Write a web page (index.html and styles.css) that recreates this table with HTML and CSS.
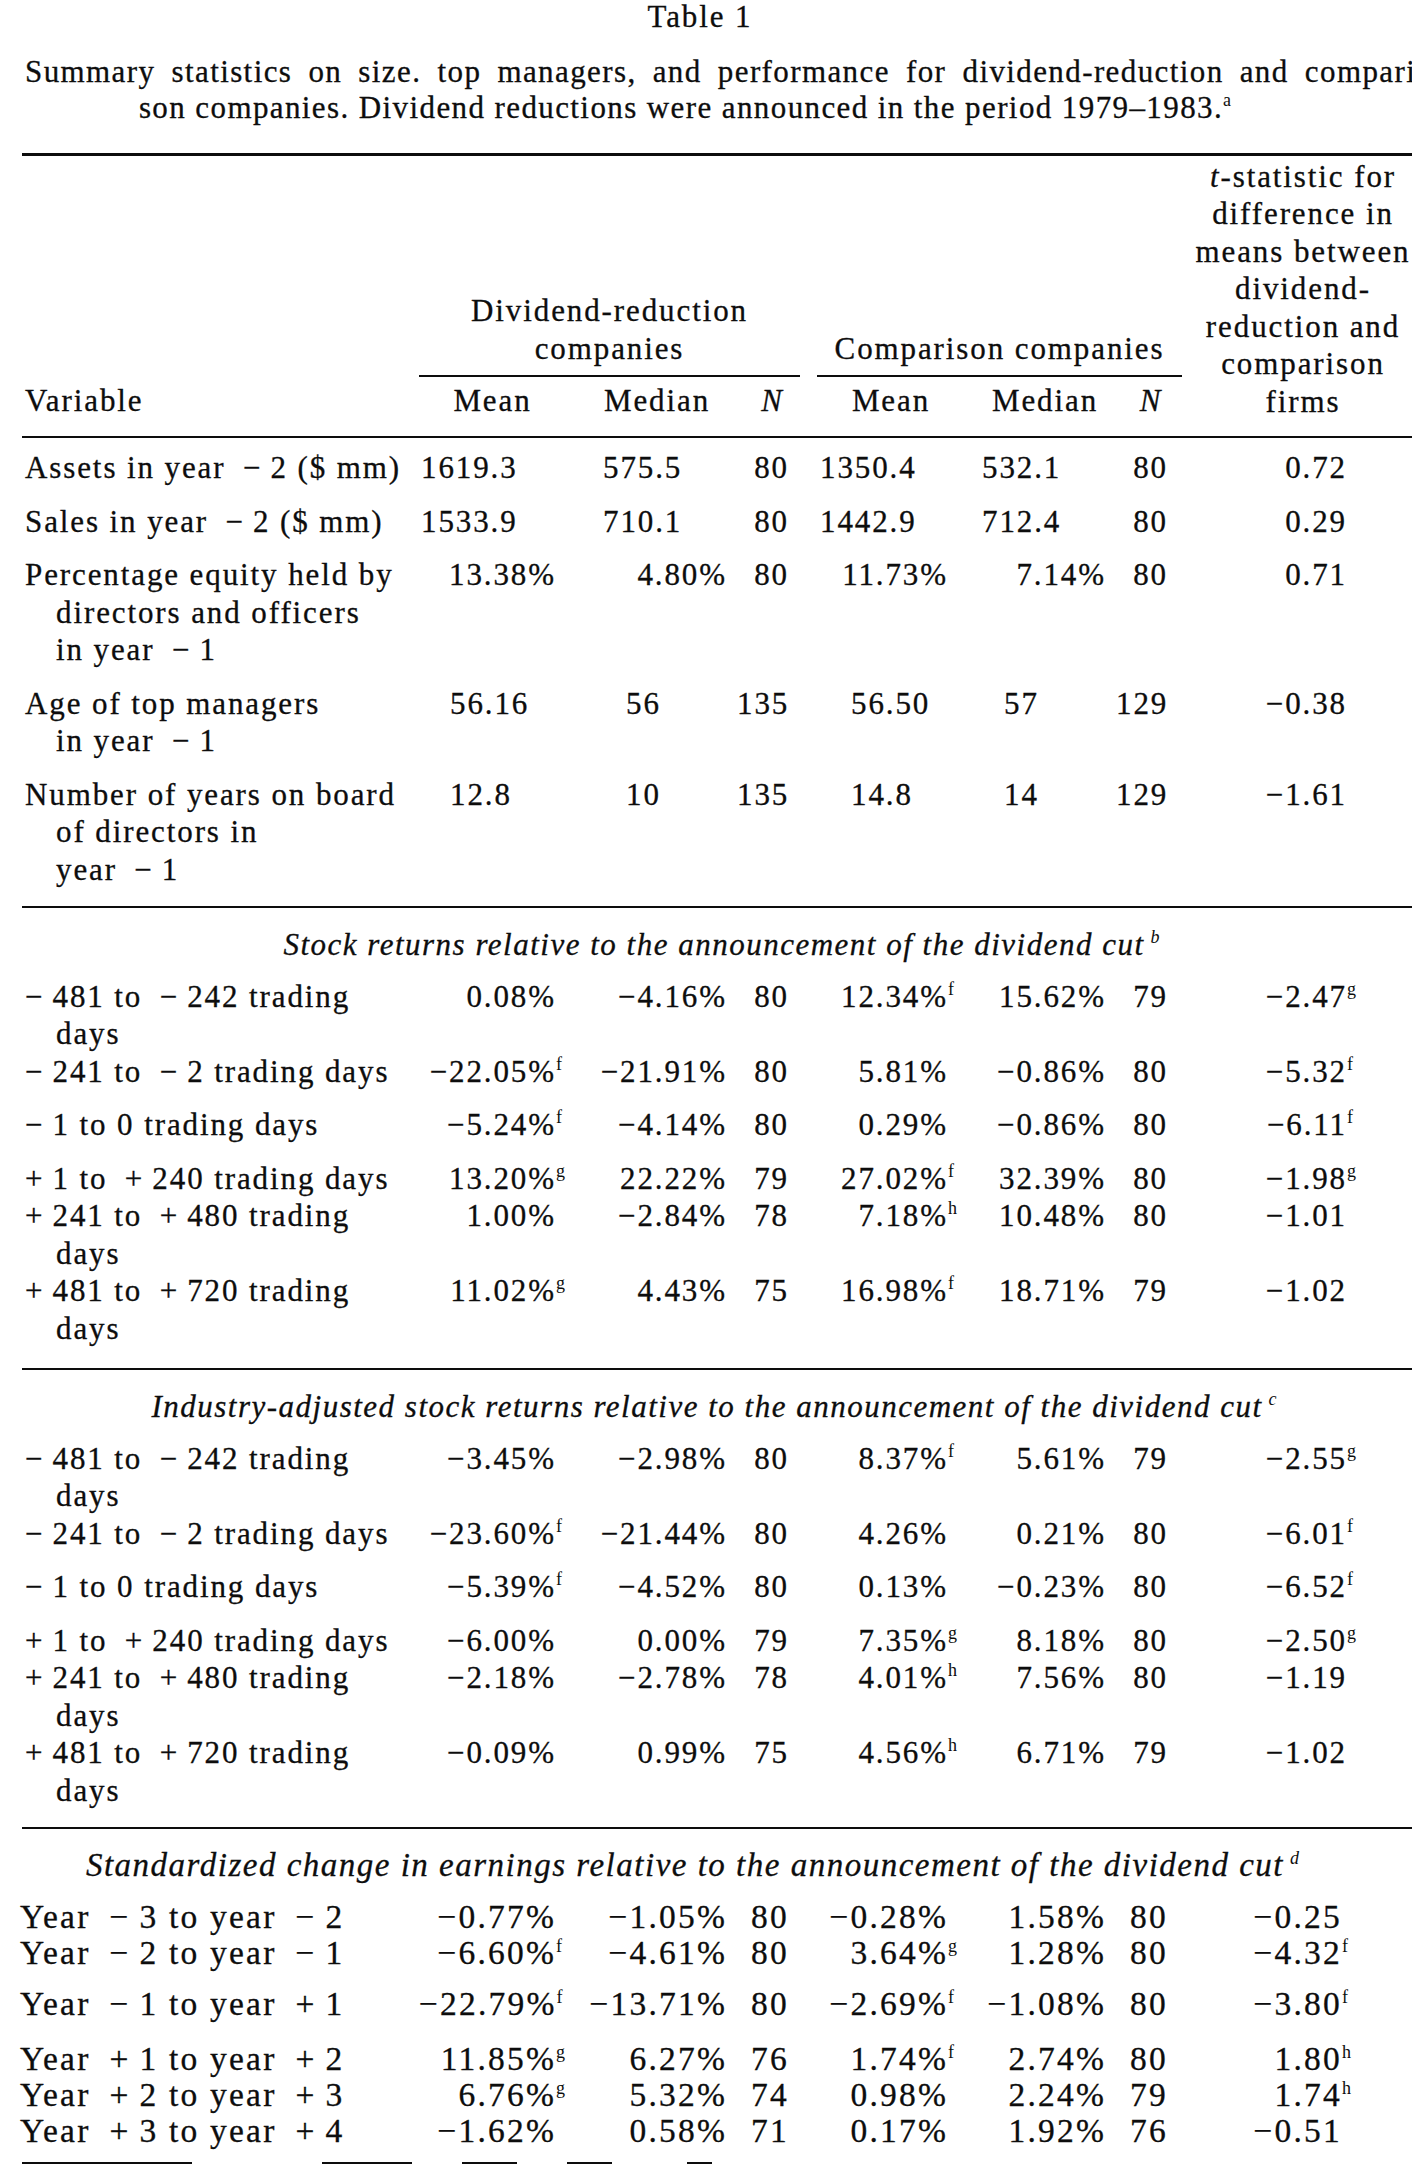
FILE: index.html
```html
<!DOCTYPE html>
<html lang="en">
<head>
  <meta charset="UTF-8">
  <title>Table 1</title>
  <link rel="stylesheet" href="styles.css">
</head>
<body>
  <div class="page">
    <div class="title">Table 1</div>
    <div class="caption">
      <div class="cap-line">Summary statistics on size. top managers, and performance for dividend-reduction and compari</div>
      <div class="cap-line last">son companies. Dividend reductions were announced in the period 1979–1983.<span class="sup">a</span></div>
    </div>

    <!-- column headings -->
    <div class="head">
      <div class="var">Variable</div>
      <div class="group div-group"><span>Dividend-reduction<br>companies</span></div>
      <div class="group cmp-group"><span>Comparison companies</span></div>
      <div class="tstat"><i>t</i>-statistic for<br>difference in<br>means between<br>dividend-<br>reduction and<br>comparison<br>firms</div>
      <div class="sub c2">Mean</div>
      <div class="sub c3">Median</div>
      <div class="sub c4"><i>N</i></div>
      <div class="sub c5">Mean</div>
      <div class="sub c6">Median</div>
      <div class="sub c7"><i>N</i></div>
    </div>

    <!-- size and managers -->
    <div class="block b1">
      <div class="row size first">
        <div class="lab">Assets in year&ensp;−&thinsp;2 ($ mm)</div>
        <div>1619.3</div><div>575.5</div><div>80</div><div>1350.4</div><div>532.1</div><div>80</div><div>0.72</div>
      </div>
      <div class="row size gap">
        <div class="lab">Sales in year&ensp;−&thinsp;2 ($ mm)</div>
        <div>1533.9</div><div>710.1</div><div>80</div><div>1442.9</div><div>712.4</div><div>80</div><div>0.29</div>
      </div>
      <div class="row gap">
        <div class="lab">Percentage equity held by<br>directors and officers<br>in year&ensp;−&thinsp;1</div>
        <div>13.38%</div><div>4.80%</div><div>80</div><div>11.73%</div><div>7.14%</div><div>80</div><div>0.71</div>
      </div>
      <div class="row pers gap">
        <div class="lab">Age of top managers<br>in year&ensp;−&thinsp;1</div>
        <div>56.16</div><div>56</div><div>135</div><div>56.50</div><div>57</div><div>129</div><div>−0.38</div>
      </div>
      <div class="row pers gap">
        <div class="lab">Number of years on board<br>of directors in<br>year&ensp;−&thinsp;1</div>
        <div>12.8</div><div>10</div><div>135</div><div>14.8</div><div>14</div><div>129</div><div>−1.61</div>
      </div>
    </div>

    <!-- stock returns -->
    <div class="block b2">
      <div class="section">Stock returns relative to the announcement of the dividend cut<span class="sup up">b</span></div>
      <div class="row">
        <div class="lab">−&thinsp;481 to&ensp;−&thinsp;242 trading<br>days</div>
        <div>0.08%</div><div>−4.16%</div><div>80</div><div>12.34%<span class="sup">f</span></div><div>15.62%</div><div>79</div><div>−2.47<span class="sup">g</span></div>
      </div>
      <div class="row">
        <div class="lab">−&thinsp;241 to&ensp;−&thinsp;2 trading days</div>
        <div>−22.05%<span class="sup">f</span></div><div>−21.91%</div><div>80</div><div>5.81%</div><div>−0.86%</div><div>80</div><div>−5.32<span class="sup">f</span></div>
      </div>
      <div class="row gap">
        <div class="lab">−&thinsp;1 to 0 trading days</div>
        <div>−5.24%<span class="sup">f</span></div><div>−4.14%</div><div>80</div><div>0.29%</div><div>−0.86%</div><div>80</div><div>−6.11<span class="sup">f</span></div>
      </div>
      <div class="row gap">
        <div class="lab">+&thinsp;1 to&ensp;+&thinsp;240 trading days</div>
        <div>13.20%<span class="sup">g</span></div><div>22.22%</div><div>79</div><div>27.02%<span class="sup">f</span></div><div>32.39%</div><div>80</div><div>−1.98<span class="sup">g</span></div>
      </div>
      <div class="row">
        <div class="lab">+&thinsp;241 to&ensp;+&thinsp;480 trading<br>days</div>
        <div>1.00%</div><div>−2.84%</div><div>78</div><div>7.18%<span class="sup">h</span></div><div>10.48%</div><div>80</div><div>−1.01</div>
      </div>
      <div class="row">
        <div class="lab">+&thinsp;481 to&ensp;+&thinsp;720 trading<br>days</div>
        <div>11.02%<span class="sup">g</span></div><div>4.43%</div><div>75</div><div>16.98%<span class="sup">f</span></div><div>18.71%</div><div>79</div><div>−1.02</div>
      </div>
    </div>

    <!-- industry-adjusted returns -->
    <div class="block b3">
      <div class="section">Industry-adjusted stock returns relative to the announcement of the dividend cut<span class="sup up">c</span></div>
      <div class="row">
        <div class="lab">−&thinsp;481 to&ensp;−&thinsp;242 trading<br>days</div>
        <div>−3.45%</div><div>−2.98%</div><div>80</div><div>8.37%<span class="sup">f</span></div><div>5.61%</div><div>79</div><div>−2.55<span class="sup">g</span></div>
      </div>
      <div class="row">
        <div class="lab">−&thinsp;241 to&ensp;−&thinsp;2 trading days</div>
        <div>−23.60%<span class="sup">f</span></div><div>−21.44%</div><div>80</div><div>4.26%</div><div>0.21%</div><div>80</div><div>−6.01<span class="sup">f</span></div>
      </div>
      <div class="row gap">
        <div class="lab">−&thinsp;1 to 0 trading days</div>
        <div>−5.39%<span class="sup">f</span></div><div>−4.52%</div><div>80</div><div>0.13%</div><div>−0.23%</div><div>80</div><div>−6.52<span class="sup">f</span></div>
      </div>
      <div class="row gap">
        <div class="lab">+&thinsp;1 to&ensp;+&thinsp;240 trading days</div>
        <div>−6.00%</div><div>0.00%</div><div>79</div><div>7.35%<span class="sup">g</span></div><div>8.18%</div><div>80</div><div>−2.50<span class="sup">g</span></div>
      </div>
      <div class="row">
        <div class="lab">+&thinsp;241 to&ensp;+&thinsp;480 trading<br>days</div>
        <div>−2.18%</div><div>−2.78%</div><div>78</div><div>4.01%<span class="sup">h</span></div><div>7.56%</div><div>80</div><div>−1.19</div>
      </div>
      <div class="row">
        <div class="lab">+&thinsp;481 to&ensp;+&thinsp;720 trading<br>days</div>
        <div>−0.09%</div><div>0.99%</div><div>75</div><div>4.56%<span class="sup">h</span></div><div>6.71%</div><div>79</div><div>−1.02</div>
      </div>
    </div>

    <!-- earnings -->
    <div class="block b4">
      <div class="section">Standardized change in earnings relative to the announcement of the dividend cut<span class="sup up">d</span></div>
      <div class="row">
        <div class="lab">Year&ensp;−&thinsp;3 to year&ensp;−&thinsp;2</div>
        <div>−0.77%</div><div>−1.05%</div><div>80</div><div>−0.28%</div><div>1.58%</div><div>80</div><div>−0.25</div>
      </div>
      <div class="row">
        <div class="lab">Year&ensp;−&thinsp;2 to year&ensp;−&thinsp;1</div>
        <div>−6.60%<span class="sup">f</span></div><div>−4.61%</div><div>80</div><div>3.64%<span class="sup">g</span></div><div>1.28%</div><div>80</div><div>−4.32<span class="sup">f</span></div>
      </div>
      <div class="row gap">
        <div class="lab">Year&ensp;−&thinsp;1 to year&ensp;+&thinsp;1</div>
        <div>−22.79%<span class="sup">f</span></div><div>−13.71%</div><div>80</div><div>−2.69%<span class="sup">f</span></div><div>−1.08%</div><div>80</div><div>−3.80<span class="sup">f</span></div>
      </div>
      <div class="row gap-l">
        <div class="lab">Year&ensp;+&thinsp;1 to year&ensp;+&thinsp;2</div>
        <div>11.85%<span class="sup">g</span></div><div>6.27%</div><div>76</div><div>1.74%<span class="sup">f</span></div><div>2.74%</div><div>80</div><div>1.80<span class="sup">h</span></div>
      </div>
      <div class="row">
        <div class="lab">Year&ensp;+&thinsp;2 to year&ensp;+&thinsp;3</div>
        <div>6.76%<span class="sup">g</span></div><div>5.32%</div><div>74</div><div>0.98%</div><div>2.24%</div><div>79</div><div>1.74<span class="sup">h</span></div>
      </div>
      <div class="row">
        <div class="lab">Year&ensp;+&thinsp;3 to year&ensp;+&thinsp;4</div>
        <div>−1.62%</div><div>0.58%</div><div>71</div><div>0.17%</div><div>1.92%</div><div>76</div><div>−0.51</div>
      </div>
    </div>
    <div class="end-rule"></div>
  </div>
</body>
</html>
```

FILE: styles.css
```css
html, body {
  overflow: hidden;
}

body {
  margin: 0;
  background: #fff;
  color: #0d0d0d;
  font-family: "Liberation Serif", "Times New Roman", serif;
  font-size: 31px;
  letter-spacing: 1.9px;
  -webkit-text-stroke: 0.3px #0d0d0d;
}

.page {
  width: 1398px;
  padding-left: 22px;
}

.title {
  width: 1356px;
  text-align: center;
  line-height: 34px;
}

/* Caption */
.caption {
  margin-top: 20px;
  line-height: 36px;
  letter-spacing: 1.4px;
}

.cap-line {
  white-space: nowrap;
  padding-left: 3px;
  word-spacing: 7px;
}

.cap-line.last {
  width: 1312px;
  text-align: center;
  word-spacing: 0;
}

.sup {
  display: inline-block;
  width: 0;
  font-size: 18px;
  line-height: 1;
  letter-spacing: 0;
  vertical-align: 12px;
  text-align: left;
  -webkit-text-stroke: 0;
}

.sup.up {
  padding-left: 6px;
}

/* Column headings */
.head {
  margin-top: 27px;
  border-top: 3px solid #0d0d0d;
  display: grid;
  grid-template-columns: 397px 147px 171px 71px 150px 158px 70px 234px;
  grid-template-rows: 221px 59px;
  line-height: 37.5px;
}

.var {
  grid-column: 1;
  grid-row: 2;
  padding: 5px 0 0 3px;
}

.group {
  grid-row: 1;
  align-self: end;
  text-align: center;
}

.group span {
  display: block;
  padding-bottom: 8px;
  border-bottom: 2px solid #0d0d0d;
}

.div-group {
  grid-column: 2 / span 3;
  margin-right: 8px;
}

.cmp-group {
  grid-column: 5 / span 3;
  margin-left: 9px;
  margin-right: 4px;
}

.tstat {
  grid-column: 8;
  grid-row: 1 / span 2;
  align-self: end;
  text-align: center;
  padding-bottom: 16px;
}

.sub {
  grid-row: 2;
  text-align: center;
  padding-top: 5px;
}

.sub.c2 { grid-column: 2; }
.sub.c3 { grid-column: 3; padding-left: 11px; }
.sub.c4 { grid-column: 4; }
.sub.c5 { grid-column: 5; padding-left: 16px; }
.sub.c6 { grid-column: 6; padding-left: 16px; }
.sub.c7 { grid-column: 7; }

/* Body blocks */
.block {
  border-top: 2px solid #0d0d0d;
  padding-bottom: 18px;
}

.block.b2 {
  padding-bottom: 21px;
}

.section {
  font-style: italic;
  text-align: center;
  line-height: 37.5px;
  letter-spacing: 1.5px;
  padding: 18px 0 14px;
}

.b2 .section {
  padding-right: 8px;
}

.b3 .section {
  padding-right: 22px;
}

.b4 .section {
  font-size: 33px;
  padding-right: 66px;
}

.row {
  display: grid;
  grid-template-columns: 397px 147px 171px 71px 150px 158px 70px 234px;
  line-height: 37.5px;
}

.row.first {
  padding-top: 11px;
}

.row.gap {
  padding-top: 16px;
}

.row > div {
  text-align: right;
  white-space: nowrap;
}

.row > .lab {
  text-align: left;
  padding-left: 34px;
  text-indent: -31px;
}

.row > :nth-child(2),
.row > :nth-child(3),
.row > :nth-child(5),
.row > :nth-child(6) {
  padding-right: 10px;
}

.row > :nth-child(4) {
  padding-right: 19px;
}

.row > :nth-child(7) {
  padding-right: 18px;
}

.row > :nth-child(8) {
  padding-right: 73px;
}

/* first block: values set from the left */
.size > :nth-child(2),
.size > :nth-child(3),
.size > :nth-child(5),
.size > :nth-child(6),
.pers > :nth-child(2),
.pers > :nth-child(3),
.pers > :nth-child(5),
.pers > :nth-child(6) {
  text-align: left;
  padding-right: 0;
}

.size > :nth-child(2) { padding-left: 2px; }
.size > :nth-child(3) { padding-left: 37px; }
.size > :nth-child(5) { padding-left: 12px; }
.size > :nth-child(6) { padding-left: 24px; }

.pers > :nth-child(2) { padding-left: 31px; }
.pers > :nth-child(3) { padding-left: 60px; }
.pers > :nth-child(5) { padding-left: 43px; }
.pers > :nth-child(6) { padding-left: 46px; }

/* last block is set a little larger in the scan */
.b4 .row {
  font-size: 33.5px;
  letter-spacing: 2.2px;
  line-height: 36px;
}

.b4 .row.gap {
  padding-top: 15px;
}

.b4 .row.gap-l {
  padding-top: 19px;
}

.b4 .row > .lab {
  padding-left: 29px;
}

.b4 .row > :nth-child(8) {
  padding-right: 78px;
}

.b4 {
  padding-bottom: 13px;
}

/* broken bottom rule of the scan */
.end-rule {
  height: 2px;
  background: linear-gradient(to right,
    #0d0d0d 0 170px,
    transparent 170px 300px,
    #0d0d0d 300px 390px,
    transparent 390px 440px,
    #0d0d0d 440px 495px,
    transparent 495px 545px,
    #0d0d0d 545px 590px,
    transparent 590px 665px,
    #0d0d0d 665px 690px,
    transparent 690px);
}
```
